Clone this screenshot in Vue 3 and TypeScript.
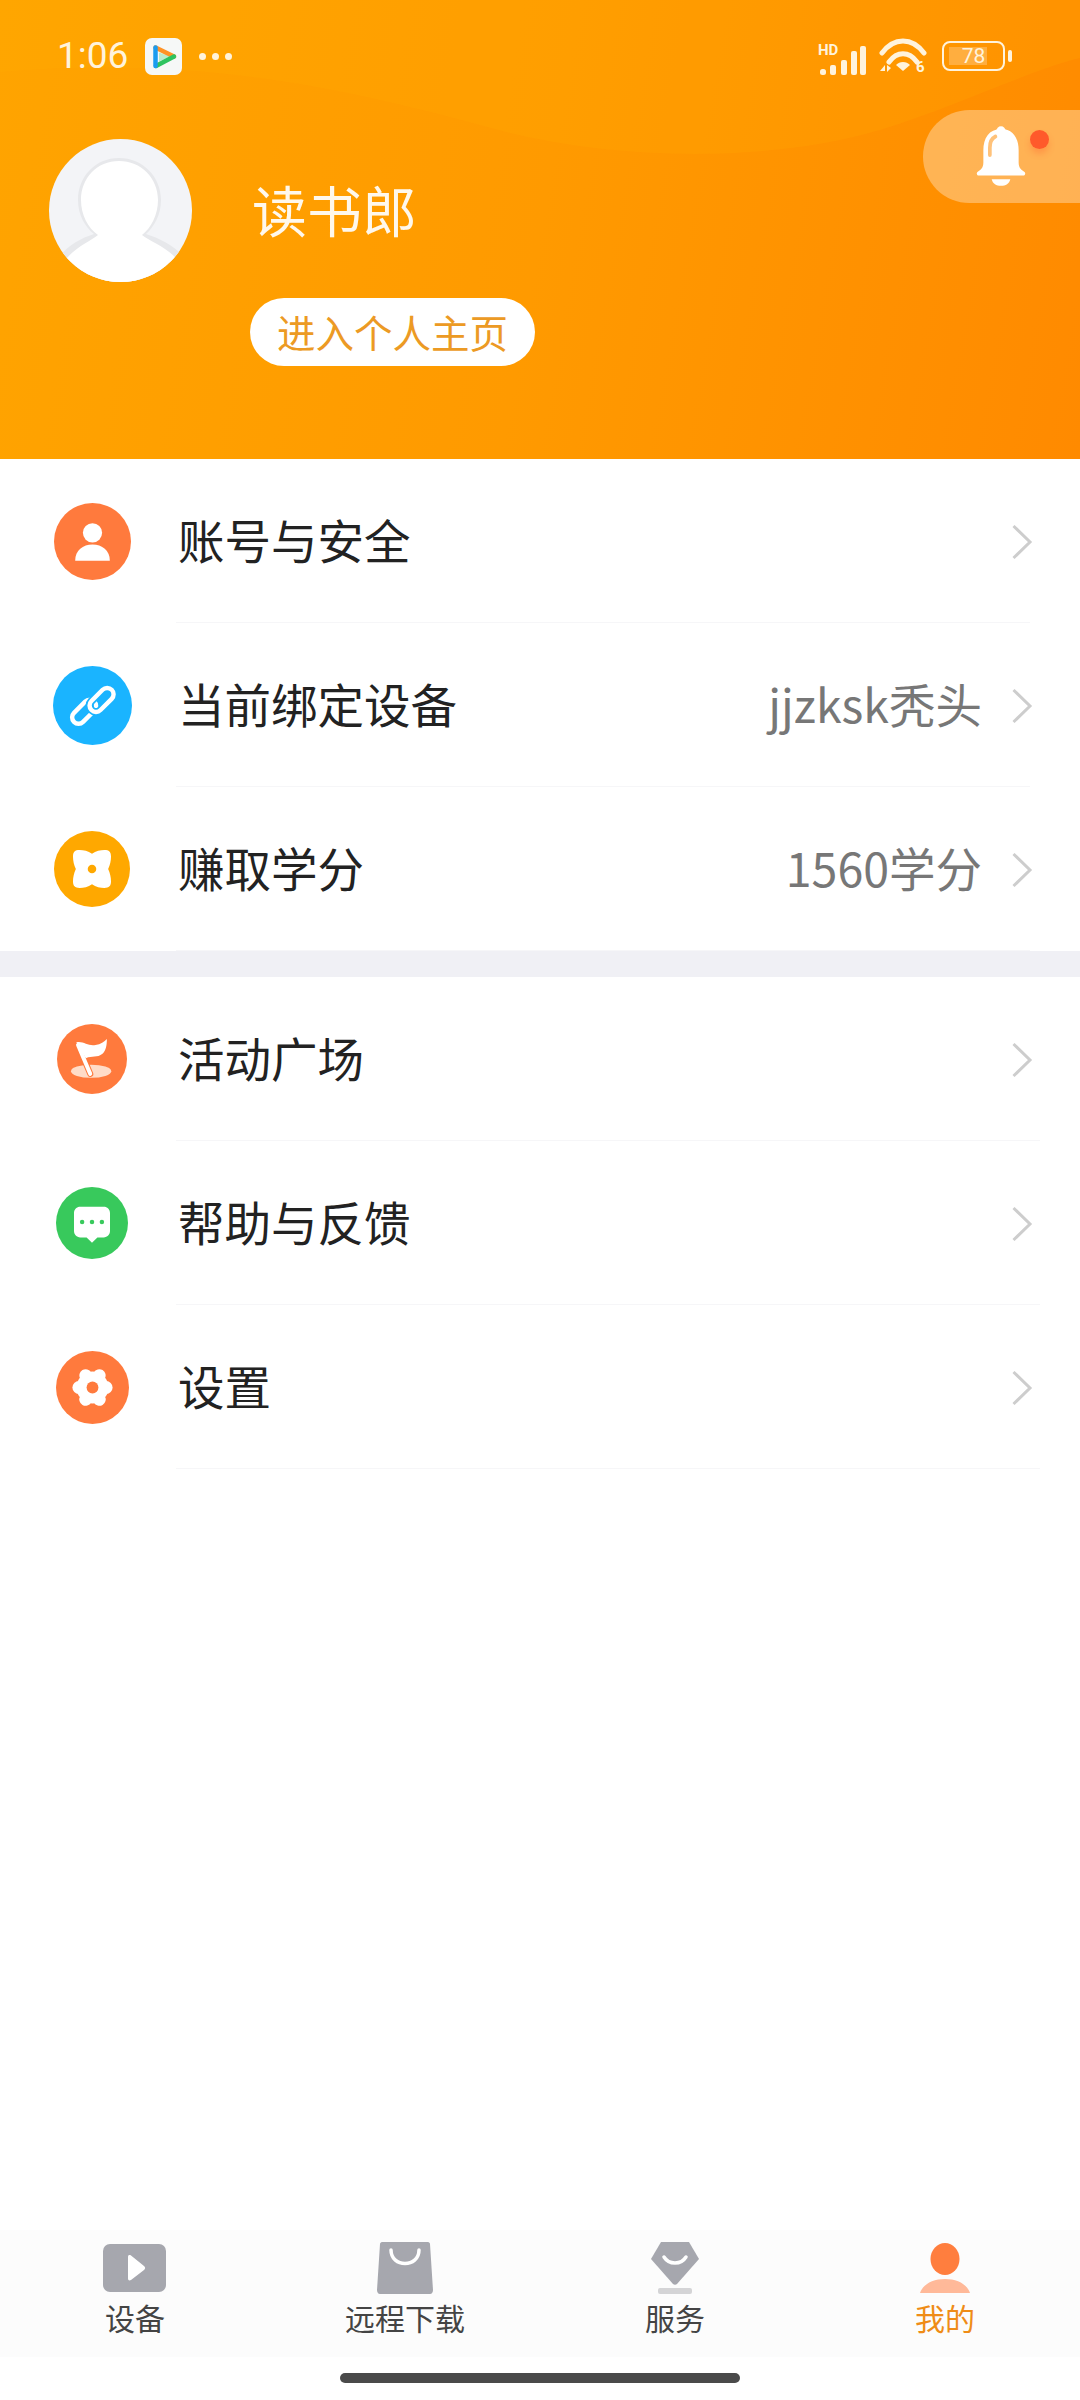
<script setup lang="ts">
interface Row { key: string; label: string; value?: string; color: string; size: number }
const groupA: Row[] = [
  { key: 'user', label: '账号与安全', color: '#ff7a3d', size: 77 },
  { key: 'link', label: '当前绑定设备', value: 'jjzksk秃头', color: '#1ab4ff', size: 79 },
  { key: 'flower', label: '赚取学分', value: '1560学分', color: '#ffa800', size: 76 },
]
const groupB: Row[] = [
  { key: 'flag', label: '活动广场', color: '#ff7a3d', size: 70 },
  { key: 'chat', label: '帮助与反馈', color: '#38c95c', size: 72 },
  { key: 'gear', label: '设置', color: '#ff7a3d', size: 73 },
]
const groups = [
  { id: 'a', rows: groupA },
  { id: 'b', rows: groupB },
]
const tabs = [
  { key: 'play', label: '设备' },
  { key: 'bag', label: '远程下载' },
  { key: 'gem', label: '服务' },
  { key: 'me', label: '我的' },
]
const lobes = [0, 60, 120, 180, 240, 300]
</script>

<template>
  <div class="page">
    <header class="hero">
      <svg class="wave" viewBox="0 0 1080 459" preserveAspectRatio="none" aria-hidden="true">
        <path d="M0 0H1080V58C1030 70 960 105 880 130C760 165 600 160 480 125C350 90 200 55 0 72Z" fill="#ffb000" opacity=".2" />
      </svg>

      <div class="status">
        <span class="time">1:06</span>
        <svg class="appicon" viewBox="0 0 37 37">
          <rect width="37" height="37" rx="7" fill="#f6f8f7" />
          <path d="M10.500 9.500L29 18.500" fill="none" stroke="#ff9326" stroke-width="4.500" stroke-linecap="round" />
          <path d="M11 28L29 18.500" fill="none" stroke="#2ec35f" stroke-width="4.500" stroke-linecap="round" />
          <path d="M10.500 9.500V28" fill="none" stroke="#1a9cf0" stroke-width="4.500" stroke-linecap="round" />
          <path d="M14 14.500V23.500L25 18.500Z" fill="#4cd07a" opacity=".35" />
        </svg>
        <span class="dots"><i></i><i></i><i></i></span>
        <span class="spacer"></span>
        <svg class="signal" viewBox="0 -4 50 38">
          <text x="0" y="12" class="svg-hd">HD</text>
          <rect x="2" y="26" width="6" height="6" rx="2.500" />
          <rect x="12" y="22" width="6" height="10" rx="2" />
          <rect x="23" y="17" width="6" height="15" rx="2" />
          <rect x="33" y="8" width="6" height="24" rx="2" />
          <rect x="42" y="3" width="6" height="29" rx="2" />
        </svg>
        <svg class="wifi" viewBox="0 0 48 40">
          <path d="M3 15C15 -1 33 -1 45 15" />
          <path d="M10 24C18 13 30 13 38 24" />
          <path d="M24 24C21 24 19 25 17 27L24 33L31 27C29 25 27 24 24 24Z" fill="#fff3dc" stroke="none" />
          <path d="M1 33L6 27V33ZM8 27V34L12 30Z" fill="#fff3dc" stroke="none" />
          <text x="37" y="34" class="svg-six">6</text>
        </svg>
        <div class="battery">
          <div class="cell">
            <span class="level"></span>
            <span class="pct">78</span>
          </div>
          <span class="tip"></span>
        </div>
      </div>

      <div class="profile">
        <div class="avatar">
          <svg viewBox="0 0 143 143">
            <circle cx="71.500" cy="71.500" r="71.500" fill="#f3f4f7" />
            <clipPath id="av"><circle cx="71.500" cy="71.500" r="71.500" /></clipPath>
            <g clip-path="url(#av)">
              <path d="M70 19C46 19 29 38 29 61C29 76 36 88 45 95C32 99 18 107 10 118L40 160H105L135 118C126 107 110 99 97 95C105 88 112 76 112 61C112 38 94 19 70 19Z" fill="#e7e8eb" />
              <path d="M70 22C48 22 32 39 32 61C32 76 39 89 49 96C42 102 28 107 17 120L40 160H105L128 120C116 107 100 102 93 96C102 89 109 76 109 61C109 39 92 22 70 22Z" fill="#fff" />
            </g>
          </svg>
        </div>
        <div class="who">
          <div class="name">读书郎</div>
          <button class="home-btn">进入个人主页</button>
        </div>
      </div>

      <div class="bell-pill">
        <svg class="bell" viewBox="0 0 56 66">
          <circle cx="28" cy="6" r="5" fill="#fff" />
          <path d="M28 4C15 4 9 14 9 27V40C9 46 6 48 3 50C1 51 2 54 4 54H52C54 54 55 51 53 50C50 48 47 46 47 40V27C47 14 41 4 28 4Z" fill="#fff" />
          <path d="M18 58H38C37 63 33 65 28 65C23 65 19 63 18 58Z" fill="#fff" />
          <path d="M16 32V24C16 18 18 14 22 12" fill="none" stroke="#ffc27a" stroke-width="4" stroke-linecap="round" />
        </svg>
        <span class="red-dot"></span>
      </div>
    </header>

    <main class="list">
      <section v-for="g in groups" :key="g.id" :class="['group', 'group-' + g.id]">
        <div v-for="r in g.rows" :key="r.key" class="row">
          <div class="icon-cell">
            <svg :width="r.size" :height="r.size" viewBox="0 0 80 80">
              <circle cx="40" cy="40" r="40" :fill="r.color" />
              <template v-if="r.key === 'user'">
                <circle cx="40" cy="31" r="10" fill="#fff" />
                <path d="M22 60C22 49 30 43 40 43C50 43 58 49 58 60Z" fill="#fff" />
              </template>
              <template v-else-if="r.key === 'link'">
                <g fill="none" transform="rotate(-45 40 40)">
                  <rect x="15" y="32" width="29" height="13" rx="6.500" stroke="#fff" stroke-width="4.500" />
                  <rect x="36" y="36" width="29" height="13" rx="6.500" :stroke="r.color" stroke-width="8" />
                  <rect x="36" y="36" width="29" height="13" rx="6.500" stroke="#fff" stroke-width="4.500" />
                </g>
              </template>
              <template v-else-if="r.key === 'flower'">
                <path d="M40 24C44 21 49 20 53 20C58 20 60 22 60 27C60 31 59 36 57 40C59 44 60 49 60 53C60 58 58 60 53 60C49 60 44 59 40 56C36 59 31 60 27 60C22 60 20 58 20 53C20 49 21 44 23 40C21 36 20 31 20 27C20 22 22 20 27 20C31 20 36 21 40 24Z" fill="#fff" />
                <circle cx="40" cy="40" r="4.500" fill="#ffa800" />
              </template>
              <template v-else-if="r.key === 'flag'">
                <ellipse cx="39" cy="54" rx="23" ry="7.500" fill="#ffdcc8" />
                <path d="M24 24L38 57" stroke="#ff7a3d" stroke-width="7" stroke-linecap="round" />
                <path d="M24 24L38 57" stroke="#fff" stroke-width="4.500" stroke-linecap="round" />
                <path d="M22 21C30 19 36 26 44 24C50 23 54 20 57 17C57 24 56 30 52 34C46 39 40 36 33 39Z" fill="#fff" />
              </template>
              <template v-else-if="r.key === 'chat'">
                <path d="M27 22H53C57 22 60 25 60 29V49C60 53 57 56 53 56H46L40 62L34 56H27C23 56 20 53 20 49V29C20 25 23 22 27 22Z" fill="#fff" />
                <circle cx="29" cy="39" r="2.500" :fill="r.color" />
                <circle cx="40" cy="39" r="2.500" :fill="r.color" />
                <circle cx="51" cy="39" r="2.500" :fill="r.color" />
              </template>
              <template v-else>
                <circle cx="40" cy="40" r="17.500" fill="#fff" />
                <circle v-for="a in lobes" :key="a" cx="55" cy="40" r="7" fill="#fff" :transform="`rotate(${a} 40 40)`" />
                <circle cx="40" cy="40" r="6.500" :fill="r.color" />
              </template>
            </svg>
          </div>
          <div class="row-body">
            <span class="label">{{ r.label }}</span>
            <span v-if="r.value" class="value">{{ r.value }}</span>
            <svg class="chev" viewBox="0 0 22 36">
              <path d="M2.500 2L19 18L2.500 34" fill="none" stroke="#cdcdcd" stroke-width="3" />
            </svg>
          </div>
        </div>
      </section>
    </main>

    <nav class="tabs">
      <div v-for="t in tabs" :key="t.key" :class="['tab', { active: t.key === 'me' }]">
        <svg class="tab-icon" viewBox="0 0 64 52">
          <template v-if="t.key === 'play'">
            <rect x="0" y="2" width="63" height="48" rx="7" fill="#a6a7ae" />
            <path d="M25 15C25 13 26.500 12.500 28 13.500L41 24C42.500 25 42.500 27 41 28L28 38C26.500 39 25 38.500 25 36.500Z" fill="#fff" />
          </template>
          <template v-else-if="t.key === 'bag'">
            <path d="M9 0H55C56 0 57 1 57 2L60 48C60 50 59 52 57 52H7C5 52 4 50 4 48L7 2C7 1 8 0 9 0Z" fill="#a6a7ae" />
            <path d="M18 8C18 26 46 26 46 8" fill="none" stroke="#fff" stroke-width="3.500" stroke-linecap="round" />
          </template>
          <template v-else-if="t.key === 'gem'">
            <path d="M18 0H46L56 17L34 42C33 43 31 43 30 42L8 17Z" fill="#a6a7ae" />
            <path d="M21 15C26 23 38 23 43 15" fill="none" stroke="#fff" stroke-width="3.500" stroke-linecap="round" />
            <rect x="15" y="46" width="34" height="6" rx="2" fill="#d4d4d6" />
          </template>
          <template v-else>
            <ellipse cx="32" cy="17" rx="14.500" ry="16" fill="#ff7e3e" />
            <path d="M7 51C10 42 20 37 32 37C44 37 54 42 57 51Z" fill="#ffb999" />
          </template>
        </svg>
        <span class="tab-label">{{ t.label }}</span>
      </div>
    </nav>

    <div class="gesture"><span></span></div>
  </div>
</template>

<style>
html, body { margin: 0; background: #fff; }
</style>

<style scoped>
.page {
  width: 1080px;
  height: 2400px;
  display: flex;
  flex-direction: column;
  background: #fff;
  font-family: "Noto Sans CJK SC", "Noto Sans", sans-serif;
  overflow: hidden;
}
.hero {
  position: relative;
  height: 459px;
  flex: none;
  box-sizing: border-box;
  padding: 34px 0 0 57px;
  background: linear-gradient(100deg, #ffa400 0%, #ff9a00 50%, #ff8a00 100%);
  overflow: hidden;
}
.wave { position: absolute; inset: 0; width: 100%; height: 100%; }
.status {
  position: relative;
  display: flex;
  align-items: center;
  height: 44px;
  padding-right: 68px;
  color: #fff3dc;
}
.time { font-family: Roboto, sans-serif; font-size: 37px; line-height: 44px; width: 88px; }
.appicon { width: 37px; height: 37px; flex: none; }
.dots { display: flex; gap: 6px; margin-left: 17px; }
.dots i { width: 7px; height: 7px; border-radius: 50%; background: #fff3dc; }
.spacer { flex: 1; }
.signal { width: 50px; height: 38px; margin-top: 4px; fill: #fff3dc; flex: none; }
.svg-hd { font: 700 15px Roboto, sans-serif; }
.wifi { width: 48px; height: 40px; margin: 4px 0 0 11px; fill: none; stroke: #fff3dc; stroke-width: 5; stroke-linecap: round; flex: none; }
.svg-six { font: 700 15px Roboto, sans-serif; fill: #fff3dc; stroke: none; }
.battery { display: flex; align-items: center; gap: 3px; margin-left: 15px; }
.cell {
  position: relative;
  box-sizing: border-box;
  width: 63px;
  height: 30px;
  border: 2.500px solid #fff3dc;
  border-radius: 8px;
  display: flex;
  align-items: center;
  justify-content: center;
}
.level { position: absolute; left: 5px; top: 4px; bottom: 4px; width: 38px; background: rgba(255, 205, 140, 0.45); }
.pct { position: relative; font: 21px/1 Roboto, sans-serif; color: #fff3dc; }
.tip { width: 4px; height: 12px; border-radius: 2px; background: #fff3dc; }

.profile { position: relative; display: flex; margin-top: 61px; margin-left: -8px; }
.avatar { width: 143px; height: 143px; flex: none; }
.avatar svg { width: 100%; height: 100%; display: block; }
.who { margin-left: 58px; display: flex; flex-direction: column; align-items: flex-start; }
.name { margin: 33px 0 0 2px; font-size: 55px; line-height: 72px; color: #fff8ec; }
.home-btn {
  margin-top: 54px;
  width: 285px;
  height: 68px;
  padding: 0 0 3px;
  border: 0;
  border-radius: 34px;
  background: #fff;
  color: #ec9a24;
  font-family: inherit;
  font-size: 38.500px;
  line-height: 64px;
  text-align: center;
}
.bell-pill {
  position: absolute;
  left: 923px;
  right: 0;
  top: 110px;
  height: 93px;
  border-radius: 47px 0 0 47px;
  background: rgba(255, 255, 255, 0.33);
}
.bell { position: absolute; left: 52px; top: 15px; width: 52px; height: 62px; }
.red-dot {
  position: absolute;
  left: 107px;
  top: 20px;
  width: 19px;
  height: 19px;
  border-radius: 50%;
  background: #ff5a2b;
  box-shadow: 0 5px 6px rgba(255, 90, 43, 0.3);
}

.list { flex: 1; }
.group-a { border-bottom: 26px solid #f0f0f5; }
.row { height: 164px; display: flex; }
.icon-cell { width: 176px; flex: none; padding: 0 8px 0 16px; box-sizing: border-box; display: flex; align-items: center; justify-content: center; }
.row-body {
  flex: 1;
  display: flex;
  align-items: center;
  box-sizing: border-box;
  height: 164px;
  margin-right: 50px;
  border-bottom: 1.500px solid #f6f6f8;
}
.group-b .row-body { margin-right: 40px; }
.label { flex: 1; margin: -4px 0 0 2px; font-size: 46.500px; line-height: 60px; color: #222; }
.value { margin: -4px 29px 0 0; font-size: 46.500px; line-height: 60px; color: #777; }
.chev { width: 22px; height: 36px; flex: none; margin: 2px -3px 0 0; }
.group-b .chev { margin-right: 7px; }

.tabs { height: 127px; flex: none; display: flex; background: #fcfcfc; }
.tab { flex: 1; display: flex; flex-direction: column; align-items: center; padding-top: 12px; box-sizing: border-box; }
.tab-icon { width: 64px; height: 52px; flex: none; }
.tab-label { margin-top: 1px; font-size: 30px; line-height: 44px; color: #444; }
.tab.active .tab-label { color: #ef8c17; }
.gesture { height: 43px; flex: none; display: flex; justify-content: center; padding-top: 16px; box-sizing: border-box; }
.gesture span { width: 400px; height: 10px; border-radius: 5px; background: #4a4a4a; }
</style>
